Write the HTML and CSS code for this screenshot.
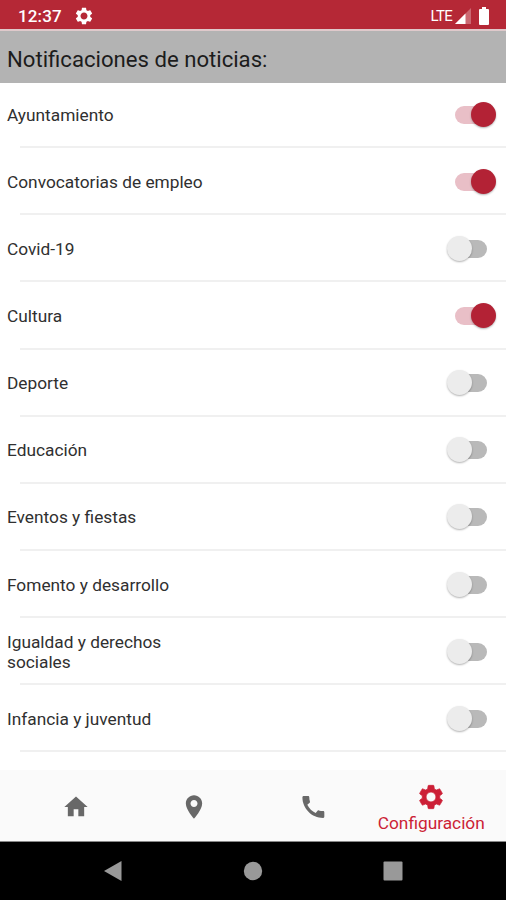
FILE: index.html
```html
<!DOCTYPE html>
<html lang="es">
<head>
<meta charset="utf-8">
<title>Configuración</title>
<link rel="stylesheet" href="styles.css">
</head>
<body>
<svg class="defs" width="0" height="0">
  <symbol id="gear" viewBox="0 0 24 24"><path d="M19.43 12.98c.04-.32.07-.64.07-.98s-.03-.66-.07-.98l2.11-1.65c.19-.15.24-.42.12-.64l-2-3.46c-.12-.22-.39-.3-.61-.22l-2.49 1c-.52-.4-1.08-.73-1.69-.98l-.38-2.65C14.46 2.18 14.25 2 14 2h-4c-.25 0-.46.18-.49.42l-.38 2.65c-.61.25-1.17.59-1.69.98l-2.49-1c-.23-.09-.49 0-.61.22l-2 3.46c-.13.22-.07.49.12.64l2.11 1.65c-.04.32-.07.65-.07.98s.03.66.07.98l-2.11 1.65c-.19.15-.24.42-.12.64l2 3.46c.12.22.39.3.61.22l2.49-1c.52.4 1.08.73 1.69.98l.38 2.65c.03.24.24.42.49.42h4c.25 0 .46-.18.49-.42l.38-2.65c.61-.25 1.17-.59 1.69-.98l2.49 1c.23.09.49 0 .61-.22l2-3.46c.12-.22.07-.49-.12-.64l-2.11-1.65zM12 16.200c-2.320 0-4.200-1.880-4.200-4.200s1.880-4.200 4.200-4.200 4.200 1.880 4.200 4.200-1.880 4.200-4.200 4.200z"/></symbol>
</svg>
<header class="status">
  <span class="time">12:37</span>
  <svg class="status-gear"><use href="#gear"/></svg>
  <span class="lte">LTE</span>
  <svg class="signal" viewBox="0 0 16 16"><path d="M16 0v16H0z" fill="#fff" opacity=".3"/><path d="M10.500 5.500V16H0z" fill="#fff"/></svg>
  <svg class="battery" viewBox="0 0 12 18"><path d="M4 0h4v2h2q1 0 1 1v14q0 1-1 1H2q-1 0-1-1V3q0-1 1-1h2z" fill="#fff"/></svg>
</header>
<h1 class="title"><span>Notificaciones de noticias:</span></h1>
<main class="list">
  <div class="row"><span>Ayuntamiento</span><i class="switch on"></i></div>
  <div class="row"><span>Convocatorias de empleo</span><i class="switch on"></i></div>
  <div class="row"><span>Covid-19</span><i class="switch"></i></div>
  <div class="row"><span>Cultura</span><i class="switch on"></i></div>
  <div class="row"><span>Deporte</span><i class="switch"></i></div>
  <div class="row"><span>Educación</span><i class="switch"></i></div>
  <div class="row"><span>Eventos y fiestas</span><i class="switch"></i></div>
  <div class="row"><span>Fomento y desarrollo</span><i class="switch"></i></div>
  <div class="row"><span>Igualdad y derechos<br>sociales</span><i class="switch"></i></div>
  <div class="row"><span>Infancia y juventud</span><i class="switch"></i></div>
</main>
<nav class="tabs">
  <a class="tab"><svg viewBox="0 0 24 24"><path d="M10 20v-6h4v6h5v-8h3L12 3 2 12h3v8z"/></svg></a>
  <a class="tab"><svg viewBox="0 0 24 24"><path d="M12 2C8.130 2 5 5.130 5 9c0 5.250 7 13 7 13s7-7.750 7-13c0-3.870-3.130-7-7-7zm0 10c-1.660 0-3-1.340-3-3s1.340-3 3-3 3 1.340 3 3-1.340 3-3 3z"/></svg></a>
  <a class="tab"><svg viewBox="0.2 0.5 23 23"><path d="M20.010 15.380c-1.230 0-2.420-.2-3.530-.56-.35-.12-.74-.03-1.010.24l-1.570 1.970c-2.830-1.350-5.480-3.900-6.890-6.830l1.950-1.660c.27-.28.35-.67.24-1.020-.37-1.110-.56-2.300-.56-3.530 0-.54-.45-.99-.99-.99H4.190C3.650 3 3 3.240 3 3.990 3 13.280 10.730 21 20.010 21c.71 0 .99-.63.99-1.180v-3.450c0-.54-.45-.99-.99-.99z"/></svg></a>
  <a class="tab active"><svg><use href="#gear"/></svg><span>Configuración</span></a>
</nav>
<footer class="navbar">
  <svg viewBox="0 0 20 22"><path d="M18.500 1v20L1 11z"/></svg>
  <svg viewBox="0 0 20 22"><circle cx="10" cy="11" r="9.200"/></svg>
  <svg viewBox="0 0 20 22"><rect x=".5" y="1.500" width="19" height="19" rx="1"/></svg>
</footer>
</body>
</html>
```
FILE: styles.css
```css
* { box-sizing: border-box; }
body {
  margin: 0;
  width: 506px;
  height: 900px;
  display: flex;
  flex-direction: column;
  overflow: hidden;
  background: #fff;
  font-family: Roboto, sans-serif;
  color: #303030;
}
.defs { display: block; position: absolute; }
.status {
  height: 29px;
  flex: none;
  display: flex;
  align-items: center;
  padding: 3px 16px 0 18px;
  background: #b52836;
  color: #fff;
}
.time { font-size: 17px; font-weight: 500; letter-spacing: .15px; width: 56px; }
.status-gear { width: 20px; height: 20px; fill: #fff; margin-right: auto; }
.lte { font-size: 15px; letter-spacing: -.7px; margin-right: 3px; }
.signal { width: 16px; height: 16px; margin-right: 7px; }
.battery { width: 12px; height: 18px; }
.title {
  height: 54px;
  flex: none;
  margin: 0;
  padding: 4px 7px 0;
  display: flex;
  align-items: center;
  border-top: 2px solid #dfc9cb;
  background: #b3b3b3;
  color: #1c1c1c;
  font-size: 22.150px;
  font-weight: 400;
  position: relative;
  z-index: 1;
}
.list {
  flex: none;
  height: 687px;
  overflow: hidden;
  margin-top: -2px;
}
.row {
  height: 67.150px;
  display: flex;
  align-items: center;
  justify-content: space-between;
  padding: 0 9px 0 7px;
  font-size: 17.300px;
  line-height: 20px;
  background: linear-gradient(#f0f0f0, #f0f0f0) 20px 100% / 486px 2px no-repeat;
}
.switch {
  position: relative;
  width: 50px;
  height: 26px;
}
.switch::before {
  content: "";
  position: absolute;
  left: 8px;
  top: 4px;
  width: 32px;
  height: 18px;
  border-radius: 9px;
  background: #b9b9b9;
}
.switch::after {
  content: "";
  position: absolute;
  left: 0;
  top: 0;
  width: 25px;
  height: 25px;
  border-radius: 50%;
  background: #ececec;
  box-shadow: 0 1px 2px rgba(0, 0, 0, .3);
}
.switch.on::before { background: #e9bfc7; }
.switch.on::after { left: 24px; background: #b32235; }
.tabs {
  height: 72px;
  flex: none;
  display: flex;
  padding: 0 15.500px 0 16.500px;
  margin-top: 2px;
  background: #fafafa;
  border-bottom: 1px solid #888;
}
.tab {
  flex: 1;
  display: flex;
  flex-direction: column;
  align-items: center;
  padding-top: 23px;
}
.tab svg { width: 28px; height: 28px; fill: #686868; flex: none; }
.tab.active { padding-top: 13px; color: #cc1f36; font-size: 17.300px; line-height: 20px; }
.tab.active svg { fill: #cc1f36; stroke: #cc1f36; stroke-width: .6px; margin-bottom: 2px; }
.navbar {
  flex: 1;
  display: flex;
  justify-content: center;
  gap: 120px;
  padding-top: 18px;
  background: #000;
}
.navbar svg { width: 20px; height: 22px; fill: #999; }
```
